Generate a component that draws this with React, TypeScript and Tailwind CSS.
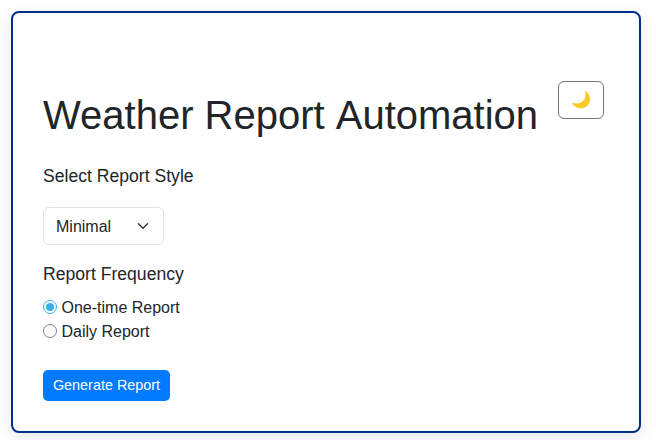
import { useState } from "react";

const frequencies = ["One-time Report", "Daily Report"];

function Moon() {
  return (
    <svg width="20" height="20" viewBox="0 0 20 20" aria-hidden="true">
      <path
        d="M14.7 1.1C19.1 4.2 20.4 10 17.6 14.3C14.2 19.5 5.6 19.6 1.3 14C.9 13.4 1.3 12.9 2 13.1C6 14.3 10.6 13.3 12.8 10C14.7 7.2 14.8 4.2 14 1.7C13.9 1.1 14.2 .8 14.7 1.1Z"
        fill="#ffca28"
      />
    </svg>
  );
}

export default function App() {
  const [frequency, setFrequency] = useState(frequencies[0]);

  return (
    <div className="h-[440px] overflow-hidden bg-white p-[11px] pr-[15px] font-['Liberation_Sans',Arial,sans-serif] text-base text-[#212529]">
      <main className="h-[422px] rounded-lg border-2 border-[#003087] bg-white px-[30px] pt-[68px] shadow-[0_4px_15px_rgba(0,0,128,0.1)]">
        <header className="flex items-start">
          <h1 className="mt-[10px] w-[515px] whitespace-nowrap text-[40px] leading-[48px]">
            Weather Report <span className="inline-block">Automation</span>
          </h1>
          <button className="flex h-[38px] w-[46px] items-center justify-center rounded-md border border-[#6c757d]">
            <Moon />
          </button>
        </header>
        <h2 className="mt-[27px] text-[17.6px] leading-[21px]">Select Report Style</h2>
        <button className="mt-[20px] flex h-[38px] w-[121px] items-center justify-between rounded-md border border-[#dee2e6] pl-3 pr-[14px]">
          <span className="pt-[2px]">Minimal</span>
          <svg width="12" height="12" viewBox="0 0 16 16" fill="none" stroke="#343a40" strokeWidth="2" strokeLinecap="round" strokeLinejoin="round">
            <path d="m2 5 6 6 6-6" />
          </svg>
        </button>
        <h2 className="mt-[19px] text-[17.6px] leading-[21px]">Report Frequency</h2>
        <div className="mt-[10px]">
          {frequencies.map((name) => (
            <label key={name} className="flex h-6 items-center">
              <input type="radio" name="frequency" className="peer sr-only" checked={frequency === name} onChange={() => setFrequency(name)} />
              <svg className="mr-[4.5px] text-[#857f8e] peer-checked:text-[#3daee9]" width="14" height="14" viewBox="0 0 14 14">
                <circle cx="7" cy="7" r="6.5" fill="none" stroke="currentColor" />
                {frequency === name && <circle cx="7" cy="7" r="4" fill="currentColor" />}
              </svg>
              <span className="pt-[2px]">{name}</span>
            </label>
          ))}
        </div>
        <button className="mt-[27px] flex h-[31px] w-[127px] items-center justify-center rounded-[5px] bg-[#007bff] text-[14.4px] text-white">Generate Report</button>
      </main>
    </div>
  );
}
